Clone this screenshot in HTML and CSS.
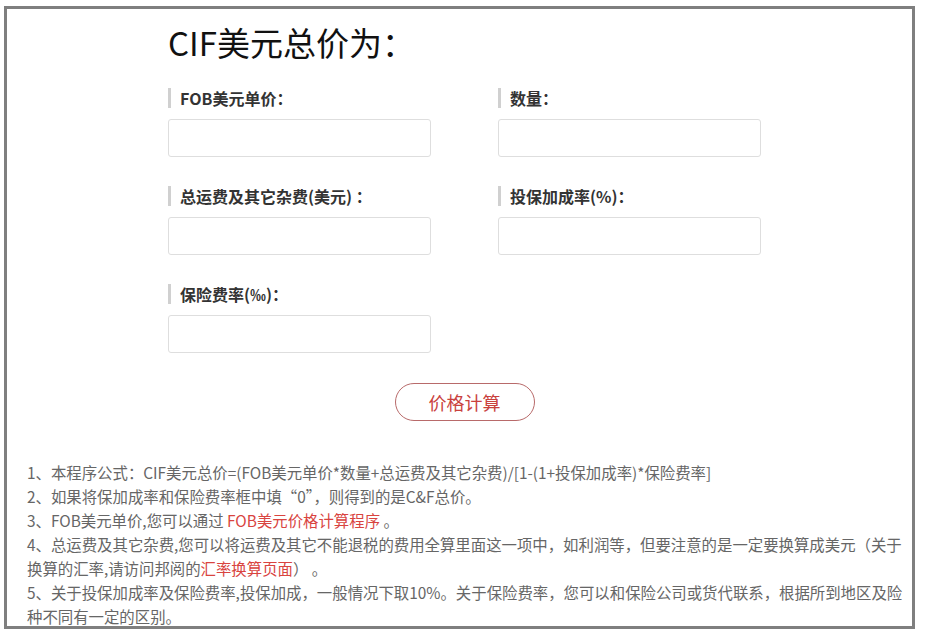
FILE: index.html
```html
<!DOCTYPE html>
<html lang="zh-CN">
<head>
  <meta charset="UTF-8">
  <title>CIF价格计算</title>
  <link rel="stylesheet" href="styles.css">
</head>
<body>
  <div class="frame">
    <!-- Calculator -->
    <div class="calc">
      <h1>CIF美元总价为：</h1>

      <div class="fields">
        <div class="field">
          <label>FOB美元单价：</label>
          <input type="text">
        </div>
        <div class="field">
          <label>数量：</label>
          <input type="text">
        </div>
        <div class="field">
          <label>总运费及其它杂费(美元) ：</label>
          <input type="text">
        </div>
        <div class="field">
          <label>投保加成率(%)：</label>
          <input type="text">
        </div>
        <div class="field">
          <label>保险费率(‰)：</label>
          <input type="text">
        </div>
      </div>

      <div class="actions">
        <button class="btn-calc">价格计算</button>
      </div>
    </div>

    <!-- Notes -->
    <div class="notes">
      <p>1、本程序公式：CIF美元总价=(FOB美元单价*数量+总运费及其它杂费)/[1-(1+投保加成率)*保险费率]</p>
      <p>2、如果将保加成率和保险费率框中填“0”，则得到的是C&amp;F总价。</p>
      <p>3、FOB美元单价,您可以通过 <a href="#">FOB美元价格计算程序</a> 。</p>
      <p>4、总运费及其它杂费,您可以将运费及其它不能退税的费用全算里面这一项中，如利润等，但要注意的是一定要换算成美元（关于换算的汇率,请访问邦阅的<a href="#">汇率换算页面</a>） 。</p>
      <p>5、关于投保加成率及保险费率,投保加成，一般情况下取10%。关于保险费率，您可以和保险公司或货代联系，根据所到地区及险种不同有一定的区别。</p>
    </div>
  </div>
</body>
</html>
```

FILE: styles.css
```css
/* Base */
* {
  margin: 0;
  padding: 0;
  box-sizing: border-box;
}
body {
  font-family: "Noto Sans CJK SC", "Liberation Sans", sans-serif;
  color: #333;
  background: #fff;
}

.frame {
  width: 911px;
  height: 623px;
  margin: 6px 0 0 4px;
  border: 3px solid #7f7f7f;
  padding-top: 13px;
}

/* Calculator */
.calc {
  width: 593px;
  margin-left: 161px;
}
.calc h1 {
  font-size: 33px;
  font-weight: normal;
  line-height: 40px;
  color: #111;
}
.fields {
  display: grid;
  grid-template-columns: 263px 263px;
  column-gap: 67px;
  row-gap: 29px;
  margin-top: 26px;
}
.field label {
  display: block;
  border-left: 3px solid #d0d0d0;
  padding-left: 9px;
  font-size: 16px;
  font-weight: bold;
  line-height: 20px;
  color: #333;
}
.field input {
  display: block;
  width: 263px;
  height: 38px;
  margin-top: 11px;
  border: 1px solid #dedede;
  border-radius: 3px;
  background: #fff;
  outline: none;
}
.actions {
  display: flex;
  justify-content: center;
  margin-top: 30px;
}
.btn-calc {
  width: 140px;
  height: 38px;
  border: 1px solid #b86a6a;
  border-radius: 19px;
  background: #fff;
  color: #c9413d;
  font-family: inherit;
  font-size: 18px;
  cursor: pointer;
}

/* Notes */
.notes {
  margin-top: 39px;
  padding: 0 2px 0 20px;
  font-size: 15.4px;
  line-height: 24px;
  color: #666;
}
.notes a {
  color: #d9443f;
  text-decoration: none;
}
```
